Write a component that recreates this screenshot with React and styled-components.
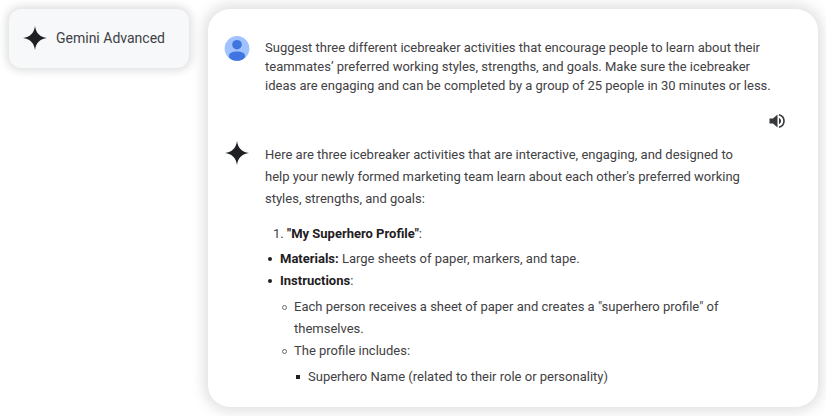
import React from "react";
import styled, { createGlobalStyle } from "styled-components";

const GlobalStyle = createGlobalStyle`
  *,
  *::before {
    box-sizing: border-box;
  }
  body {
    margin: 0;
    background: #ffffff;
    color: #3f4144;
    font-family: Roboto, "Liberation Sans", sans-serif;
    font-size: 13px;
    line-height: 22px;
  }
`;

const Page = styled.div`
  display: grid;
  grid-template-columns: 180px minmax(0, 1fr);
  gap: 19px;
  align-items: start;
  padding: 9px 8px 10px 9px;
`;

const ProductBadge = styled.header`
  display: flex;
  align-items: center;
  gap: 8px;
  padding: 16px 13px 17px;
  border-radius: 12px;
  background: #f6f8fa;
  box-shadow: 0 0 10px 2px rgba(0, 0, 0, 0.15);
`;

const ProductName = styled.h1`
  margin: 0;
  font-size: 14px;
  line-height: 22px;
  font-weight: 400;
  white-space: nowrap;
`;

const Conversation = styled.main`
  padding: 27px 33px 19px 16px;
  border-radius: 22px;
  background: #ffffff;
  box-shadow: 0 0 14px 4px rgba(0, 0, 0, 0.13);
`;

const Message = styled.section`
  display: grid;
  grid-template-columns: 26px minmax(0, 1fr);
  column-gap: 15px;
  align-items: start;
`;

const Prompt = styled.p`
  margin: 2px 0 0;
  padding-right: 6px;
  line-height: 19px;
`;

const Toolbar = styled.div`
  display: flex;
  justify-content: flex-end;
  padding: 18px 0 11px;
`;

const SoundButton = styled.button`
  display: flex;
  padding: 0;
  border: 0;
  background: none;
  color: #36383b;
  cursor: pointer;
`;

const Answer = styled.div`
  padding: 4px 25px 0 0;
`;

const Intro = styled.p`
  margin: 0 0 13px;
`;

const Activities = styled.ol`
  margin: 0 0 3px;
  padding-left: 22px;
`;

const List = styled.ul`
  margin: ${({ $nested }) => ($nested ? "4px 0 0" : "0")};
  padding: 0;
  list-style: none;
`;

const markers = {
  disc: "background: currentColor; border-radius: 50%;",
  circle: "border: 1px solid currentColor; border-radius: 50%;",
  square: "background: currentColor;",
};

const Item = styled.li`
  display: grid;
  grid-template-columns: 4px minmax(0, 1fr);
  column-gap: 8px;
  padding-left: 2px;

  &::before {
    content: "";
    width: ${({ $marker }) => ($marker === "circle" ? "5px" : "4px")};
    height: ${({ $marker }) => ($marker === "circle" ? "5px" : "4px")};
    margin-top: 9px;
    color: ${({ $marker }) => ($marker === "circle" ? "#66686b" : "#1f2023")};
    ${({ $marker }) => markers[$marker]}
  }
`;

const Strong = styled.strong`
  color: #1f2023;
  font-weight: 700;
`;

const Details = styled.div`
  padding-left: 1px;
`;

function Spark() {
  return (
    <svg width="26" height="26" viewBox="0 0 26 26" aria-hidden="true">
      <path
        d="M13 1C13.9 8 18 12.1 25 13C18 13.9 13.9 18 13 25C12.1 18 8 13.9 1 13C8 12.1 12.1 8 13 1Z"
        fill="#1f2023"
      />
    </svg>
  );
}

function Avatar() {
  return (
    <svg width="26" height="26" viewBox="0 0 26 26" role="img" aria-label="You">
      <clipPath id="avatar-edge">
        <circle cx="13" cy="12.4" r="12.4" />
      </clipPath>
      <g clipPath="url(#avatar-edge)">
        <rect width="26" height="26" fill="#a0c3ff" />
        <circle cx="13" cy="8.7" r="4.8" fill="#4075df" />
        <path
          d="M5 20.2C5 17.2 8 15.6 13 15.6S21 17.2 21 20.2C21 23 17.5 25 13 25S5 23 5 20.2Z"
          fill="#4075df"
        />
      </g>
    </svg>
  );
}

function Speaker() {
  return (
    <svg width="16" height="16" viewBox="0 0 16 16" fill="none" aria-hidden="true">
      <path d="M0.5 5.5H4L8.5 1.5V14.5L4 10.5H0.5Z" fill="currentColor" />
      <path d="M10 5C11.3 5.6 12 6.7 12 8S11.3 10.4 10 11Z" fill="currentColor" />
      <path d="M10 1.8C13 2.6 15 5 15 8S13 13.4 10 14.2" stroke="currentColor" strokeWidth="1.6" />
    </svg>
  );
}

export default function App() {
  return (
    <>
      <GlobalStyle />
      <Page>
        <ProductBadge>
          <Spark />
          <ProductName>Gemini Advanced</ProductName>
        </ProductBadge>
        <Conversation>
          <Message>
            <Avatar />
            <Prompt>
              Suggest three different icebreaker activities that encourage people to learn about their
              teammates’ preferred working styles, strengths, and goals. Make sure the icebreaker
              ideas are engaging and can be completed by a group of 25 people in 30 minutes or less.
            </Prompt>
          </Message>
          <Toolbar>
            <SoundButton type="button" aria-label="Listen">
              <Speaker />
            </SoundButton>
          </Toolbar>
          <Message>
            <Spark />
            <Answer>
              <Intro>
                Here are three icebreaker activities that are interactive, engaging, and designed to
                help your newly formed marketing team learn about each other's preferred working
                styles, strengths, and goals:
              </Intro>
              <Activities>
                <li>
                  <Strong>"My Superhero Profile"</Strong>:
                </li>
              </Activities>
              <Details>
                <List>
                  <Item $marker="disc">
                    <div>
                      <Strong>Materials:</Strong> Large sheets of paper, markers, and tape.
                    </div>
                  </Item>
                  <Item $marker="disc">
                    <div>
                      <Strong>Instructions</Strong>:
                      <List $nested>
                        <Item $marker="circle">
                          <div>
                            Each person receives a sheet of paper and creates a "superhero profile" of
                            themselves.
                          </div>
                        </Item>
                        <Item $marker="circle">
                          <div>
                            The profile includes:
                            <List $nested>
                              <Item $marker="square">
                                <div>Superhero Name (related to their role or personality)</div>
                              </Item>
                            </List>
                          </div>
                        </Item>
                      </List>
                    </div>
                  </Item>
                </List>
              </Details>
            </Answer>
          </Message>
        </Conversation>
      </Page>
    </>
  );
}
